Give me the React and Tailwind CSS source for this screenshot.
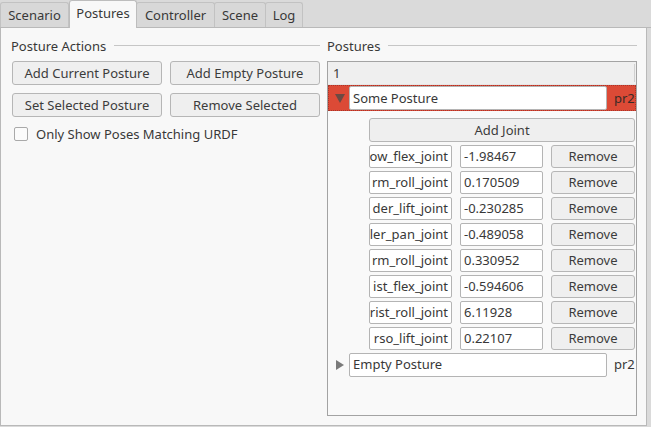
export default function App() {
  const joints = [
    ["ow_flex_joint", "-1.98467"],
    ["rm_roll_joint", "0.170509"],
    ["der_lift_joint", "-0.230285"],
    ["ler_pan_joint", "-0.489058"],
    ["rm_roll_joint", "0.330952"],
    ["ist_flex_joint", "-0.594606"],
    ["rist_roll_joint", "6.11928"],
    ["rso_lift_joint", "0.22107"],
  ];
  const tabs = [
    ["Scenario", "w-[69px]"],
    ["Postures", "w-[68px]"],
    ["Controller", "w-[79px]"],
    ["Scene", "w-[52px]"],
    ["Log", "w-[38px]"],
  ];
  const btn =
    "flex items-center justify-center rounded-[3px] border border-[#b6b6b6] bg-[#efefef] text-[#3c3c3c]";
  return (
    <div className="w-[651px] h-[427px] bg-[#dadada] font-['Noto_Sans',sans-serif] text-[13px] leading-[17px] text-[#383838] overflow-hidden">
      {/* Tab bar */}
      <div className="flex h-[28px] items-end border-b border-[#b9b9b9]">
        {tabs.map(([t, w]) =>
          t === "Postures" ? (
            <div
              key={t}
              className={`${w} -mb-px h-[28px] flex items-center justify-center rounded-t-[3px] border border-b-0 border-[#bdbdbd] bg-[#f8f8f8] pb-[2px] relative z-10`}
            >
              {t}
            </div>
          ) : (
            <div
              key={t}
              className={`${w} h-[25px] flex items-center justify-center rounded-t-[3px] border border-b-0 border-[#c2c2c2] bg-[#d8d8d8] -ml-px first:ml-0`}
            >
              {t}
            </div>
          )
        )}
      </div>
      {/* Pane */}
      <div className="w-[647px] h-[398px] border-x border-b border-[#b9b9b9] bg-[#f8f8f8] flex gap-[7px] pl-[11px] pr-[9px] pt-[10px]">
        {/* Left column */}
        <div className="w-[308px] flex flex-col">
          <div className="flex items-center h-[17px]">
            <span className="-ml-px">Posture Actions</span>
            <div className="ml-[8px] flex-1 h-px bg-[#c6c6c6] -mt-[3px]" />
          </div>
          <div className="mt-[6px] grid grid-cols-2 gap-x-[8px] gap-y-[8px]">
            <div className={`${btn} h-[24px]`}>Add Current Posture</div>
            <div className={`${btn} h-[24px]`}>Add Empty Posture</div>
            <div className={`${btn} h-[24px]`}>Set Selected Posture</div>
            <div className={`${btn} h-[24px]`}>Remove Selected</div>
          </div>
          <div className="mt-[9px] flex items-center h-[16px] pl-[2px]">
            <div className="w-[14px] h-[14px] rounded-[2px] border border-[#a9a9a9] bg-[#fbfbfb]" />
            <span className="ml-[8px]">Only Show Poses Matching URDF</span>
          </div>
        </div>
        {/* Right column */}
        <div className="w-[310px] flex flex-col">
          <div className="flex items-center h-[17px]">
            <span>Postures</span>
            <div className="ml-[8px] flex-1 h-px bg-[#c6c6c6] -mt-[3px]" />
          </div>
          <div className="mt-[6px] h-[355px] border border-[#a3a3a3] bg-[#f9f9f9] flex flex-col">
            {/* header */}
            <div className="h-[23px] bg-[#efefef] flex items-center pl-[5px] pr-[1px] border-b border-[#e6e6e6]">
              <span className="flex-1">1</span>
              <div className="w-px h-[18px] bg-[#d0d0d0]" />
            </div>
            {/* selected row */}
            <div className="h-[26px] bg-[#dc4a36] flex items-center border border-dotted border-[#a8362a]">
              <div className="w-[20px] flex justify-center pl-[1px]">
                <svg width="10" height="9" viewBox="0 0 10 9">
                  <polygon points="0,0 10,0 5,9" fill="#6b4a43" />
                </svg>
              </div>
              <div className="w-[258px] h-[24px] bg-white border border-[#b4b4b4] rounded-[2px] flex items-center pl-[3px]">
                Some Posture
              </div>
              <span className="ml-[7px] text-[#3a2a26]">pr2</span>
            </div>
            {/* child widget */}
            <div className="pl-[41px] pr-[1px] pt-[7px] flex flex-col">
              <div className={`${btn} h-[24px]`}>Add Joint</div>
              <div className="mt-[3px] flex flex-col gap-[3px]">
                {joints.map(([n, v], i) => (
                  <div key={i} className="flex gap-[8px] h-[23px]">
                    <div className="w-[83px] h-full bg-white border border-[#b4b4b4] rounded-[2px] overflow-hidden flex justify-end items-center pr-[3px] whitespace-nowrap">
                      <span className="shrink-0">{n}</span>
                    </div>
                    <div className="w-[83px] h-full bg-white border border-[#b4b4b4] rounded-[2px] flex items-center pl-[3px]">
                      {v}
                    </div>
                    <div className={`${btn} w-[84px] h-full`}>Remove</div>
                  </div>
                ))}
              </div>
            </div>
            {/* empty posture row */}
            <div className="mt-[2px] h-[25px] flex items-center">
              <div className="w-[21px] flex justify-center pl-[3px]">
                <svg width="8" height="10" viewBox="0 0 8 10">
                  <polygon points="0,0 8,5 0,10" fill="#7a7a7a" />
                </svg>
              </div>
              <div className="w-[258px] h-[24px] bg-white border border-[#b4b4b4] rounded-[2px] flex items-center pl-[3px]">
                Empty Posture
              </div>
              <span className="ml-[7px]">pr2</span>
            </div>
          </div>
        </div>
      </div>
    </div>
  );
}
